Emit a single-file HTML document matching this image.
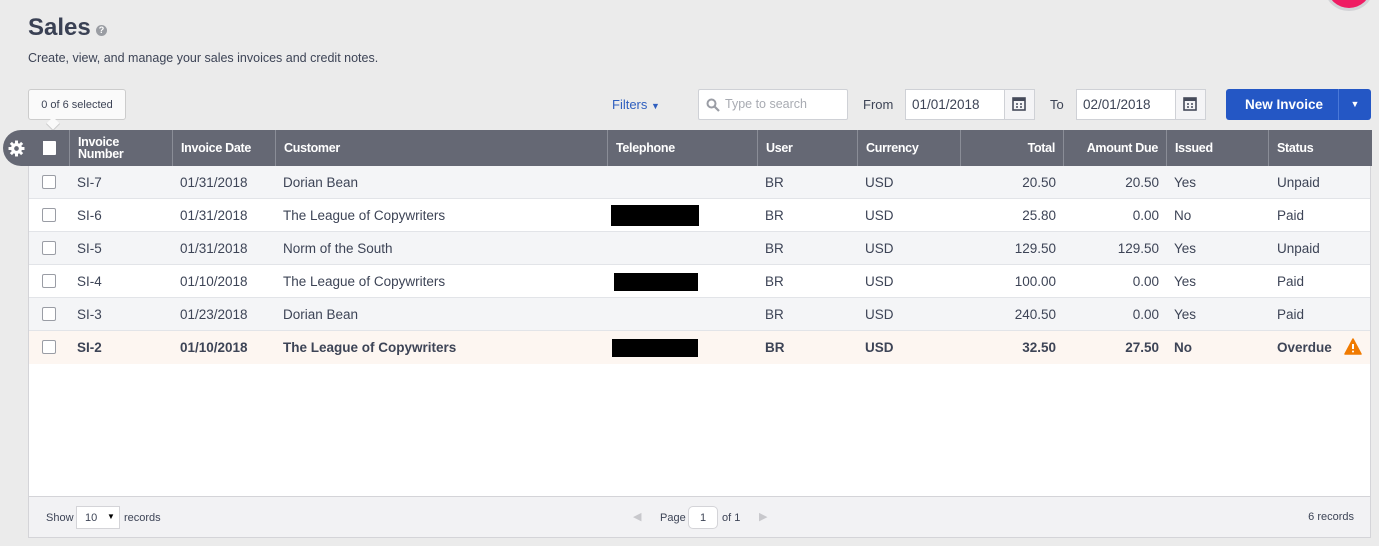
<!DOCTYPE html>
<html><head><style>
*{box-sizing:border-box;margin:0;padding:0}
body{width:1379px;height:546px;background:#ebebeb;font-family:"Liberation Sans",sans-serif;color:#3d4456;position:relative;overflow:hidden;font-size:13px}
.abs{position:absolute}
h1{position:absolute;left:28px;top:14px;font-size:24px;font-weight:bold;color:#3a4154}
.table{position:absolute;left:28px;top:130px;width:1343px;height:408px;background:#fff;border:1px solid #d4d4d8;border-top:none}
.hdr{position:absolute;left:0;top:0;width:1343px;height:36px;background:#656874;color:#fff;font-weight:bold;font-size:12.5px}
.hc{position:absolute;top:0;height:36px;display:flex;align-items:center;padding-left:8px;border-left:1px solid #8a8d97;line-height:12px;letter-spacing:-0.3px}
.row{position:absolute;left:0;width:1341px;height:33px;border-bottom:1px solid #e2e4e8;font-size:13.5px}
.row div{position:absolute;top:9px}
.cb{width:14px;height:14px;border:1px solid #9a9da5;background:#fff;border-radius:2px;left:13px;top:9px!important}
.r{text-align:right}
.black{background:#000;height:21px;top:6px!important}
</style></head><body>
<h1>Sales</h1>
<div class="abs" style="left:96px;top:25px;width:11px;height:11px;border-radius:50%;background:#9a9da3;color:#fff;font-size:9px;font-weight:bold;text-align:center;line-height:11px">?</div>
<div class="abs" style="left:28px;top:51px;font-size:12.5px">Create, view, and manage your sales invoices and credit notes.</div>
<div class="abs" style="left:1328px;top:-30px;width:42px;height:38px;border-radius:50%;background:#ef1c63;box-shadow:0 0 0 3px #d2d3d6"></div>
<div class="abs" style="left:28px;top:89px;width:98px;height:31px;border:1px solid #ccc;border-radius:3px;background:#fafafa;font-size:11px;line-height:30px;text-align:center">0 of 6 selected</div>
<div class="abs" style="left:48px;top:119px;width:10px;height:10px;background:#fafafa;border-right:1px solid #ccc;border-bottom:1px solid #ccc;transform:rotate(45deg)"></div>
<div class="abs" style="left:612px;top:97px;color:#2f5fbf;font-size:13px">Filters <span style="font-size:9px">&#9660;</span></div>
<div class="abs" style="left:698px;top:89px;width:150px;height:31px;background:#fff;border:1px solid #cfd1d6;border-radius:2px;color:#a8abb2;font-size:12.5px;line-height:29px;padding-left:26px">Type to search
<svg class="abs" style="left:7px;top:8px" width="14" height="14" viewBox="0 0 14 14"><circle cx="5.5" cy="5.5" r="4" stroke="#9a9da5" stroke-width="2" fill="none"/><path d="M8.5 8.5 L13 13" stroke="#9a9da5" stroke-width="2.2"/></svg></div>
<div class="abs" style="left:863px;top:97px">From</div>
<div class="abs" style="left:905px;top:89px;width:130px;height:31px;background:#fff;border:1px solid #cfd1d6;line-height:29px;padding-left:6px;font-size:13.5px">01/01/2018<div class="abs" style="right:0;top:0;width:30px;height:29px;border-left:1px solid #cfd1d6;background:#f4f4f6"></div></div>
<div class="abs" style="left:1050px;top:97px">To</div>
<div class="abs" style="left:1076px;top:89px;width:130px;height:31px;background:#fff;border:1px solid #cfd1d6;line-height:29px;padding-left:6px;font-size:13.5px">02/01/2018<div class="abs" style="right:0;top:0;width:30px;height:29px;border-left:1px solid #cfd1d6;background:#f4f4f6"></div></div>
<svg class="abs" style="left:1012px;top:96px" width="14" height="15"><rect x="1" y="2" width="12" height="12" fill="none" stroke="#454a5a" stroke-width="1.6"/><rect x="1" y="2" width="12" height="3" fill="#454a5a"/><path d="M4 8h2M8 8h2M4 11h2M8 11h2" stroke="#454a5a" stroke-width="1.5"/></svg>
<svg class="abs" style="left:1183px;top:96px" width="14" height="15"><rect x="1" y="2" width="12" height="12" fill="none" stroke="#454a5a" stroke-width="1.6"/><rect x="1" y="2" width="12" height="3" fill="#454a5a"/><path d="M4 8h2M8 8h2M4 11h2M8 11h2" stroke="#454a5a" stroke-width="1.5"/></svg>
<div class="abs" style="left:1226px;top:89px;width:145px;height:31px;background:#2457c5;border-radius:3px;color:#fff;font-weight:bold;font-size:13.5px;line-height:31px;padding-left:19px">New Invoice<div class="abs" style="left:112px;top:0;height:31px;border-left:1px solid #4a78d8;width:33px;text-align:center;font-size:9px">&#9660;</div></div>

<div class="table">
<div class="hdr">
<div class="hc" style="left:40px;border:none;width:1px"></div>
<div class="hc" style="left:40px;width:103px">Invoice<br>Number</div>
<div class="hc" style="left:143px;width:103px">Invoice Date</div>
<div class="hc" style="left:246px;width:332px">Customer</div>
<div class="hc" style="left:578px;width:150px">Telephone</div>
<div class="hc" style="left:728px;width:100px">User</div>
<div class="hc" style="left:828px;width:103px">Currency</div>
<div class="hc" style="left:931px;width:103px;justify-content:flex-end;padding-right:8px">Total</div>
<div class="hc" style="left:1034px;width:103px;justify-content:flex-end;padding-right:8px">Amount Due</div>
<div class="hc" style="left:1137px;width:102px">Issued</div>
<div class="hc" style="left:1239px;width:102px">Status</div>
<div class="abs" style="left:13px;top:11px;width:14px;height:14px;background:#fff;border-radius:1px"></div>
</div>
<div class="row" style="top:36px;background:#f4f5f7"><div class="cb"></div><div style="left:48px">SI-7</div><div style="left:151px">01/31/2018</div><div style="left:254px">Dorian Bean</div><div style="left:736px">BR</div><div style="left:836px">USD</div><div class="r" style="right:314px">20.50</div><div class="r" style="right:211px">20.50</div><div style="left:1145px">Yes</div><div style="left:1248px">Unpaid</div></div>
<div class="row" style="top:69px"><div class="cb"></div><div style="left:48px">SI-6</div><div style="left:151px">01/31/2018</div><div style="left:254px">The League of Copywriters</div><div class="black" style="left:582px;width:88px"></div><div style="left:736px">BR</div><div style="left:836px">USD</div><div class="r" style="right:314px">25.80</div><div class="r" style="right:211px">0.00</div><div style="left:1145px">No</div><div style="left:1248px">Paid</div></div>
<div class="row" style="top:102px;background:#f4f5f7"><div class="cb"></div><div style="left:48px">SI-5</div><div style="left:151px">01/31/2018</div><div style="left:254px">Norm of the South</div><div style="left:736px">BR</div><div style="left:836px">USD</div><div class="r" style="right:314px">129.50</div><div class="r" style="right:211px">129.50</div><div style="left:1145px">Yes</div><div style="left:1248px">Unpaid</div></div>
<div class="row" style="top:135px"><div class="cb"></div><div style="left:48px">SI-4</div><div style="left:151px">01/10/2018</div><div style="left:254px">The League of Copywriters</div><div class="black" style="left:585px;width:84px;height:18px;top:8px!important"></div><div style="left:736px">BR</div><div style="left:836px">USD</div><div class="r" style="right:314px">100.00</div><div class="r" style="right:211px">0.00</div><div style="left:1145px">Yes</div><div style="left:1248px">Paid</div></div>
<div class="row" style="top:168px;background:#f4f5f7"><div class="cb"></div><div style="left:48px">SI-3</div><div style="left:151px">01/23/2018</div><div style="left:254px">Dorian Bean</div><div style="left:736px">BR</div><div style="left:836px">USD</div><div class="r" style="right:314px">240.50</div><div class="r" style="right:211px">0.00</div><div style="left:1145px">Yes</div><div style="left:1248px">Paid</div></div>
<div class="row" style="top:201px;background:#fdf6f1;font-weight:bold;border-bottom:none"><div class="cb" style="font-weight:normal"></div><div style="left:48px">SI-2</div><div style="left:151px">01/10/2018</div><div style="left:254px">The League of Copywriters</div><div class="black" style="left:583px;width:86px;height:18px;top:8px!important"></div><div style="left:736px">BR</div><div style="left:836px">USD</div><div class="r" style="right:314px">32.50</div><div class="r" style="right:211px">27.50</div><div style="left:1145px">No</div><div style="left:1248px">Overdue</div>
<svg style="position:absolute;left:1315px;top:7px" width="18" height="17"><path d="M9 1 L17 16 H1 Z" fill="#f07a00" stroke="#f07a00" stroke-linejoin="round" stroke-width="1.5"/><path d="M9 6v5" stroke="#fff" stroke-width="2"/><circle cx="9" cy="13.5" r="1" fill="#fff"/></svg></div>
<div class="abs" style="left:0;top:366px;width:1341px;height:41px;background:#f2f2f4;border-top:1px solid #d4d4d8;font-size:11px">
<div class="abs" style="left:17px;top:15px">Show</div>
<div class="abs" style="left:47px;top:9px;width:44px;height:23px;background:#fff;border:1px solid #d4d4d8;padding:5px 0 0 8px">10 <span style="font-size:8px;position:absolute;left:30px;top:5px;color:#000">&#9660;</span></div>
<div class="abs" style="left:95px;top:15px">records</div>
<div class="abs" style="left:604px;top:13px;color:#c8c8cc">&#9664;</div>
<div class="abs" style="left:631px;top:15px">Page</div>
<div class="abs" style="left:659px;top:9px;width:30px;height:23px;background:#fff;border:1px solid #d4d4d8;border-radius:5px;text-align:center;padding-top:5px">1</div>
<div class="abs" style="left:693px;top:15px">of 1</div>
<div class="abs" style="left:730px;top:13px;color:#c8c8cc">&#9654;</div>
<div class="abs" style="right:16px;top:14px">6 records</div>
</div>
</div>
<div class="abs" style="left:3px;top:130px;width:40px;height:36px;border-radius:18px 0 0 18px;background:#656874"></div>
<svg class="abs" style="left:8px;top:140px" width="17" height="17" viewBox="0 0 16 16"><g fill="#fff"><circle cx="8" cy="8" r="5.2"/><rect x="6.6" y="0.5" width="2.8" height="15"/><rect x="6.6" y="0.5" width="2.8" height="15" transform="rotate(45 8 8)"/><rect x="6.6" y="0.5" width="2.8" height="15" transform="rotate(90 8 8)"/><rect x="6.6" y="0.5" width="2.8" height="15" transform="rotate(135 8 8)"/></g><circle cx="8" cy="8" r="2.2" fill="#656874"/></svg>
</body></html>
